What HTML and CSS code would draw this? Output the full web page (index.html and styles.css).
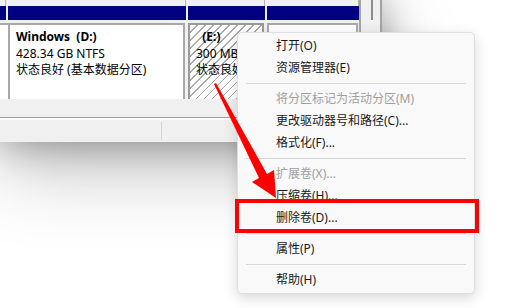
FILE: index.html
```html
<!DOCTYPE html>
<html>

<head>
	<meta charset="utf-8">
	<link rel="stylesheet" href="styles.css">
</head>

<body>

	<!-- Disk management window (cropped) -->
	<div class="window">
		<div class="disk-area">
			<div class="disk-map">
				<div class="prev-row">
					<div class="prev-cell cell-cut"></div>
					<div class="prev-cell cell-d"></div>
					<div class="prev-cell cell-e"></div>
					<div class="prev-cell cell-f"></div>
				</div>
				<div class="disk-row">
					<div class="part cell-cut">
						<div class="part-head"></div>
						<div class="part-body"><div class="part-box box-cut"></div></div>
					</div>
					<div class="part cell-d">
						<div class="part-head"></div>
						<div class="part-body">
							<div class="part-box">
								<div class="part-name">Windows&nbsp;&nbsp;(D:)</div>
								<div>428.34 GB NTFS</div>
								<div>状态良好 (基本数据分区)</div>
							</div>
						</div>
					</div>
					<div class="part cell-e">
						<div class="part-head"></div>
						<div class="part-body">
							<div class="part-box box-selected">
								<div class="part-name">&nbsp;&nbsp;(E:)</div>
								<div>300 MB</div>
								<div>状态良好</div>
							</div>
						</div>
					</div>
					<div class="part cell-f">
						<div class="part-head"></div>
						<div class="part-body"><div class="part-box"></div></div>
					</div>
				</div>
			</div>
			<div class="scroll-strip"><div class="scroll-thumb"></div></div>
		</div>
		<div class="legend"></div>
		<div class="status-bar">
			<div class="status-cell status-main"></div>
			<div class="status-cell"></div>
		</div>
	</div>

	<!-- Context menu -->
	<div class="menu">
		<div class="menu-item">打开(O)</div>
		<div class="menu-item">资源管理器(E)</div>
		<div class="menu-sep"></div>
		<div class="menu-item disabled">将分区标记为活动分区(M)</div>
		<div class="menu-item">更改驱动器号和路径(C)...</div>
		<div class="menu-item">格式化(F)...</div>
		<div class="menu-sep"></div>
		<div class="menu-item disabled">扩展卷(X)...</div>
		<div class="menu-item">压缩卷(H)...</div>
		<div class="menu-item">删除卷(D)...</div>
		<div class="menu-sep"></div>
		<div class="menu-item">属性(P)</div>
		<div class="menu-sep"></div>
		<div class="menu-item">帮助(H)</div>
	</div>

	<!-- Annotations -->
	<div class="highlight-box"></div>
	<svg class="arrow" width="513" height="308" viewBox="0 0 513 308">
		<polygon points="214,84 216,83 267,174 274,170 276,198 252,182 259,178" fill="#ff0000" />
	</svg>

</body>

</html>
```

FILE: styles.css
```css
body {
	margin: 0;
	width: 513px;
	height: 308px;
	overflow: hidden;
	position: relative;
	background-color: #fff;
	font-family: "Noto Sans", "Noto Sans CJK SC", sans-serif;
	font-size: 12px;
	color: #000;
}

/* Window */

.window {
	width: 382px;
	display: flex;
	flex-direction: column;
	background-color: #f0f0f0;
	box-shadow: 0 0 36px rgba(0, 0, 0, .34), 0 24px 80px rgba(0, 0, 0, .26);
}

.disk-area {
	display: flex;
	height: 99px;
}

.disk-map {
	width: 359px;
	display: flex;
	flex-direction: column;
}

.prev-row {
	height: 6px;
	display: flex;
	gap: 2px;
}

.prev-cell {
	box-sizing: border-box;
	border-right: 1px solid #b4b4b4;
}

.disk-row {
	flex: 1;
	display: flex;
	gap: 2px;
}

.cell-cut {
	width: 6px;
}

.cell-d {
	width: 178px;
}

.cell-e {
	width: 77px;
}

.cell-f {
	width: 92px;
}

.part {
	display: flex;
	flex-direction: column;
}

.part-head {
	height: 14px;
	background-color: #000080;
}

.part-body {
	flex: 1;
	padding: 3px 1px 0 0;
	min-height: 0;
}

.part-box {
	height: 100%;
	box-sizing: border-box;
	border: 2px solid #a8a8a8;
	border-bottom: none;
	background-color: #fff;
	padding: 4px 6px;
	line-height: 16.5px;
	white-space: nowrap;
	overflow: hidden;
}

.box-cut {
	border-left: none;
}

.box-selected {
	border-color: #999;
	background: repeating-linear-gradient(135deg, #fff 0 4.6px, #a6a6a6 4.6px 5.7px);
}

.part-name {
	font-weight: bold;
}

.scroll-strip {
	width: 23px;
	box-sizing: border-box;
	border-left: 2px solid #a4a4a4;
	border-right: 2px solid #a4a4a4;
	padding-left: 10px;
}

.scroll-thumb {
	width: 2px;
	height: 20px;
	background-color: #8c8c8c;
}

.legend {
	height: 18px;
	border-bottom: 1px solid #a0a0a0;
}

.status-bar {
	height: 22px;
	display: flex;
	border-top: 2px solid #fbfbfb;
}

.status-cell {
	flex: 1;
}

.status-main {
	flex: none;
	width: 161px;
	margin: 2px 0;
	border-right: 1px solid #d4d4d4;
}

/* Context menu */

.menu {
	position: absolute;
	left: 237px;
	top: 32px;
	width: 238px;
	box-sizing: border-box;
	padding: 2px 0;
	background-color: #f9f9f9;
	border: 1px solid #dedede;
	border-radius: 5px;
	box-shadow: 0 4px 14px rgba(0, 0, 0, .16);
}

.menu-item {
	height: 22px;
	line-height: 22px;
	padding-left: 38px;
	color: #1a1a1a;
	white-space: nowrap;
}

.menu-item.disabled {
	color: #a0a0a0;
}

.menu-sep {
	height: 1px;
	margin: 4px 8px;
	background-color: #d8d8d8;
}

/* Annotations */

.highlight-box {
	position: absolute;
	left: 235px;
	top: 199px;
	width: 244px;
	height: 34px;
	box-sizing: border-box;
	border: 4px solid #ff0000;
}

.arrow {
	position: absolute;
	left: 0;
	top: 0;
}
```
